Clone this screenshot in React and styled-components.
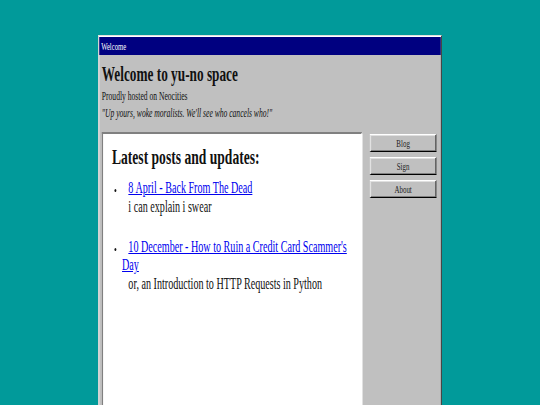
import React from 'react';
import styled, { createGlobalStyle } from 'styled-components';

// the page is laid out at 854px and squeezed into the 540px viewport
const PAGE_WIDTH = 854;
const SQUEEZE = 540 / PAGE_WIDTH;

const GlobalStyle = createGlobalStyle`
  html, body {
    margin: 0;
    padding: 0;
    background: #019a9a;
    overflow: hidden;
  }

  body {
    font-family: 'Liberation Serif', 'Times New Roman', serif;
    color: #111;
  }
`;

const Desktop = styled.div`
  width: ${PAGE_WIDTH}px;
  height: 405px;
  padding-top: 35px;
  box-sizing: border-box;
  transform: scaleX(${SQUEEZE});
  transform-origin: 0 0;
`;

const Window = styled.div`
  width: 544px;
  min-height: 420px;
  margin: 0 auto;
  padding: 1px;
  box-sizing: border-box;
  background: #c0c0c0;
  border: 1px solid;
  border-color: #dfdfdf #000 #000 #dfdfdf;
  box-shadow: inset 1px 1px #fff, inset -1px -1px #808080;
`;

const TitleBar = styled.div`
  display: flex;
  align-items: center;
  height: 18px;
  padding-left: 3px;
  background: #000080;
  color: #fff;
  font-size: 10.5px;
`;

const WindowBody = styled.div`
  padding: 0 7px 0 4px;
`;

const SiteTitle = styled.h1`
  margin: 7px 0 2px;
  font-size: 21px;
  line-height: 24px;
  font-weight: bold;
`;

const Tagline = styled.p`
  margin: 0;
  font-size: 12px;
  line-height: 17px;
  font-style: ${(p) => (p.$quote ? 'italic' : 'normal')};
`;

const Main = styled.div`
  display: grid;
  grid-template-columns: 1fr 105px;
  column-gap: 12px;
  align-items: start;
  margin-top: 10px;
`;

const Panel = styled.div`
  min-height: 300px;
  padding: 11px 14px 13px;
  background: #fff;
  border: 2px solid;
  border-color: #808080 #fff #fff #808080;
`;

const PanelHeading = styled.h2`
  margin: 0;
  font-size: 21.5px;
  line-height: 25px;
  font-weight: bold;
`;

const PostList = styled.ul`
  margin: 9px 0 0;
  padding-left: 16px;
  font-size: 16px;
`;

const Post = styled.li`
  &::marker {
    font-size: 9px;
  }

  & + & {
    margin-top: 22px;
  }
`;

const PostLink = styled.a`
  margin-left: 10px;
  color: #0000ee;
  text-decoration: underline;
`;

const PostBlurb = styled.div`
  margin-top: 1px;
  padding-left: 10px;
`;

const Sidebar = styled.nav`
  display: flex;
  flex-direction: column;
  gap: 5px;
  padding-top: 2px;
`;

const NavButton = styled.button`
  height: 18px;
  padding: 0;
  background: #c0c0c0;
  border: 1px solid;
  border-color: #fff #000 #000 #fff;
  box-shadow: inset -1px -1px #808080, inset 1px 1px #dfdfdf;
  color: #222;
  font-family: inherit;
  font-size: 11px;
`;

const posts = [
  {
    title: '8 April - Back From The Dead',
    blurb: 'i can explain i swear',
  },
  {
    title: "10 December - How to Ruin a Credit Card Scammer's Day",
    blurb: 'or, an Introduction to HTTP Requests in Python',
  },
];

const links = ['Blog', 'Sign', 'About'];

const App = () => (
  <>
    <GlobalStyle />
    <Desktop>
      <Window>
        <TitleBar>Welcome</TitleBar>
        <WindowBody>
          <SiteTitle>Welcome to yu-no space</SiteTitle>
          <Tagline>Proudly hosted on Neocities</Tagline>
          <Tagline $quote>"Up yours, woke moralists. We'll see who cancels who!"</Tagline>
          <Main>
            <Panel>
              <PanelHeading>Latest posts and updates:</PanelHeading>
              <PostList>
                {posts.map((post) => (
                  <Post key={post.title}>
                    <PostLink href="#">{post.title}</PostLink>
                    <PostBlurb>{post.blurb}</PostBlurb>
                  </Post>
                ))}
              </PostList>
            </Panel>
            <Sidebar>
              {links.map((label) => (
                <NavButton key={label}>{label}</NavButton>
              ))}
            </Sidebar>
          </Main>
        </WindowBody>
      </Window>
    </Desktop>
  </>
);

export default App;
